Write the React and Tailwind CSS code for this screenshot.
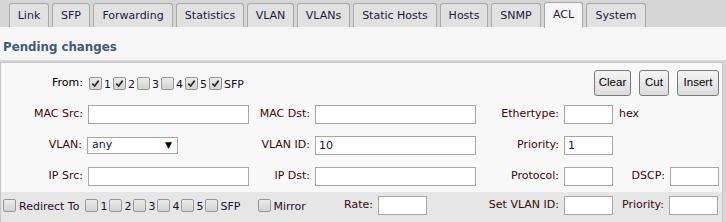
import React from 'react';

const tabs = [
    { name: 'Link', w: 'w-[40px]' },
    { name: 'SFP', w: 'w-[38px]' },
    { name: 'Forwarding', w: 'w-[80px]' },
    { name: 'Statistics', w: 'w-[68px]' },
    { name: 'VLAN', w: 'w-[47px]' },
    { name: 'VLANs', w: 'w-[53px]' },
    { name: 'Static Hosts', w: 'w-[84px]' },
    { name: 'Hosts', w: 'w-[48px]' },
    { name: 'SNMP', w: 'w-[50px]' },
    { name: 'ACL', w: 'w-[39px]', active: true },
    { name: 'System', w: 'w-[60px]' },
];

const Check = ({ checked }) => (
    <span className="inline-flex items-center justify-center w-[13px] h-[13px] shrink-0 border border-[#979797] rounded-[2px] bg-gradient-to-b from-[#ececec] to-[#d2d2d2]">
        {checked && (
            <svg viewBox="0 0 10 10" className="w-[9px] h-[9px]">
                <path d="M1.5 5.2 L4 7.8 L8.6 1.8" fill="none" stroke="#2b2b2b" strokeWidth="1.9" />
            </svg>
        )}
    </span>
);

const Port = ({ label, checked }) => (
    <span className="flex items-center">
        <Check checked={checked} />
        <span className="ml-[2px] mr-[2px] pt-[4px] text-[#1c1030]">{label}</span>
    </span>
);

const Ports = ({ checked }) => (
    <div className="flex items-center">
        {['1', '2', '3', '4', '5', 'SFP'].map((p, i) => (
            <Port key={p} label={p} checked={checked[i]} />
        ))}
    </div>
);

const Input = ({ w, value }) => (
    <div className={`${w} h-[19px] bg-white border border-[#a6a6a6] pl-[3px] leading-[17px] text-[#101040]`}>
        {value}
    </div>
);

const Label = ({ w, children, left }) => (
    <div className={`${w} ${left ? 'text-left pl-[6px]' : 'text-right pr-[5px]'} text-[#3a0808] whitespace-nowrap`}>
        {children}
    </div>
);

const Button = ({ w, children }) => (
    <button className={`${w} h-[26px] border border-[#7a7a7a] rounded-[3px] bg-gradient-to-b from-[#f4f4f4] to-[#dcdcdc] text-black text-[11.5px] font-['Liberation_Sans',sans-serif]`}>
        {children}
    </button>
);

export default function App() {
    return (
        <div className="w-[726px] h-[222px] overflow-hidden bg-[#d6d6d6] font-['DejaVu_Sans',Verdana,sans-serif] text-[11px]">
            {/* tab strip */}
            <div className="h-[27px] flex items-end gap-[3px] pl-[9px]">
                {tabs.map((t) =>
                    t.active ? (
                        <div
                            key={t.name}
                            className={`${t.w} h-[26px] -mb-[1px] bg-[#f6f6f6] border border-b-0 border-[#a8a8a8] rounded-t-[3px] flex items-center justify-center text-[#1a1a3a] pb-[1px]`}
                        >
                            {t.name}
                        </div>
                    ) : (
                        <div
                            key={t.name}
                            className={`${t.w} h-[24px] bg-[#e1e1e1] border border-b-0 border-[#a8a8a8] rounded-t-[3px] flex items-center justify-center text-[#1a1a3a] pt-[1px]`}
                        >
                            {t.name}
                        </div>
                    )
                )}
            </div>

            <div className="h-[33px] bg-[#f6f6f6] px-[3px] pt-[12px] text-[11.8px] font-bold text-[#3f5b77] leading-[16px]">
                Pending changes
            </div>

            <div className="mt-[2px] mr-[3px] bg-[#f8f8f8] border border-b-0 border-[#c4c4c4]">
                {/* From row */}
                <div className="h-[36px] pt-[4px] flex items-center">
                    <Label w="w-[87px]">
                        <span className="text-black">From:</span>
                    </Label>
                    <div className="ml-[1px]">
                        <Ports checked={[true, true, false, false, true, true]} />
                    </div>
                    <div className="ml-auto mr-[3px] flex gap-[8px]">
                        <Button w="w-[37px]">Clear</Button>
                        <Button w="w-[30px]">Cut</Button>
                        <Button w="w-[42px]">Insert</Button>
                    </div>
                </div>

                {/* MAC row */}
                <div className="h-[31px] flex items-center">
                    <Label w="w-[87px]">MAC Src:</Label>
                    <Input w="w-[161px]" />
                    <Label w="w-[66px]">MAC Dst:</Label>
                    <Input w="w-[161px]" />
                    <Label w="w-[88px]">Ethertype:</Label>
                    <Input w="w-[49px]" />
                    <Label w="w-[57px]" left>hex</Label>
                </div>

                {/* VLAN row */}
                <div className="h-[31px] flex items-center">
                    <Label w="w-[86px]">VLAN:</Label>
                    <div className="w-[91px] h-[17px] bg-white border border-[#a6a6a6] flex items-center pl-[4px] pr-[5px] text-[#101040] mr-[71px]">
                        <span>any</span>
                        <span className="ml-auto text-[9px] text-black">▼</span>
                    </div>
                    <Label w="w-[66px]">VLAN ID:</Label>
                    <Input w="w-[161px]" value="10" />
                    <Label w="w-[88px]">Priority:</Label>
                    <Input w="w-[49px]" value="1" />
                </div>

                {/* IP row */}
                <div className="h-[31px] flex items-center">
                    <Label w="w-[87px]">IP Src:</Label>
                    <Input w="w-[161px]" />
                    <Label w="w-[66px]">IP Dst:</Label>
                    <Input w="w-[161px]" />
                    <Label w="w-[88px]">Protocol:</Label>
                    <Input w="w-[49px]" />
                    <Label w="w-[57px]">DSCP:</Label>
                    <Input w="w-[49px]" />
                </div>

                {/* action row */}
                <div className="h-[40px] bg-[#e6e6e6] pt-[4px] flex items-start">
                    <div className="w-[337px] flex items-center h-[19px] pl-[2px]">
                        <Check />
                        <span className="ml-[3px] mr-[6px] pt-[4px] text-[#2a0a2a]">Redirect To</span>
                        <Ports checked={[false, false, false, false, false, false]} />
                        <span className="ml-[16px] flex items-center">
                            <Check />
                            <span className="ml-[2px] pt-[4px] text-[#2a0a2a]">Mirror</span>
                        </span>
                    </div>
                    <div className="flex items-center h-[19px]">
                        <Label w="w-[40px]">Rate:</Label>
                        <Input w="w-[49px]" />
                        <Label w="w-[137px]">Set VLAN ID:</Label>
                        <Input w="w-[49px]" />
                        <Label w="w-[56px]">Priority:</Label>
                        <Input w="w-[49px]" />
                    </div>
                </div>
            </div>
        </div>
    );
}
